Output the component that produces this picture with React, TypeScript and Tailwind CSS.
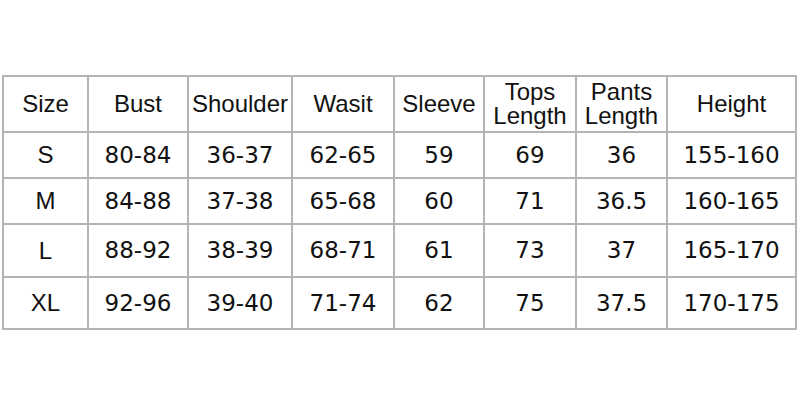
import React from "react";

const head = ["Size", "Bust", "Shoulder", "Wasit", "Sleeve", "Tops\nLength", "Pants\nLength", "Height"];

const rows = [
    ["S", "80-84", "36-37", "62-65", "59", "69", "36", "155-160"],
    ["M", "84-88", "37-38", "65-68", "60", "71", "36.5", "160-165"],
    ["L", "88-92", "38-39", "68-71", "61", "73", "37", "165-170"],
    ["XL", "92-96", "39-40", "71-74", "62", "75", "37.5", "170-175"],
];

const rowHeights = ["h-[56px]", "h-[46px]", "h-[46px]", "h-[53px]", "h-[52px]"];

const Cell = ({ children, className }: { children: React.ReactNode; className?: string }) => (
    <div className={"flex items-center justify-center text-center border-r-2 border-b-2 border-[#b4b4b4] text-[#111] " + (className || "")}>
        {children}
    </div>
);

export default function App() {
    return (
        <div className="w-[800px] h-[410px] bg-white pt-[75px] pl-[2px]">
            <div className="grid grid-cols-[85px_100px_104px_102px_90px_92px_91px_129px] w-max border-l-2 border-t-2 border-[#b4b4b4]">
                {head.map((h, i) => (
                    <Cell key={h} className={rowHeights[0] + " font-['Liberation_Sans',Arial,sans-serif] text-[24px] leading-[24px] whitespace-pre-line"}>
                        {h}
                    </Cell>
                ))}
                {rows.map((r, ri) =>
                    r.map((v, ci) => (
                        <Cell
                            key={ri + "-" + ci}
                            className={
                                rowHeights[ri + 1] +
                                (ci === 0
                                    ? " font-['Liberation_Sans',Arial,sans-serif] text-[24px]"
                                    : " font-['DejaVu_Sans',sans-serif] text-[23px]")
                            }
                        >
                            {v}
                        </Cell>
                    ))
                )}
            </div>
        </div>
    );
}
